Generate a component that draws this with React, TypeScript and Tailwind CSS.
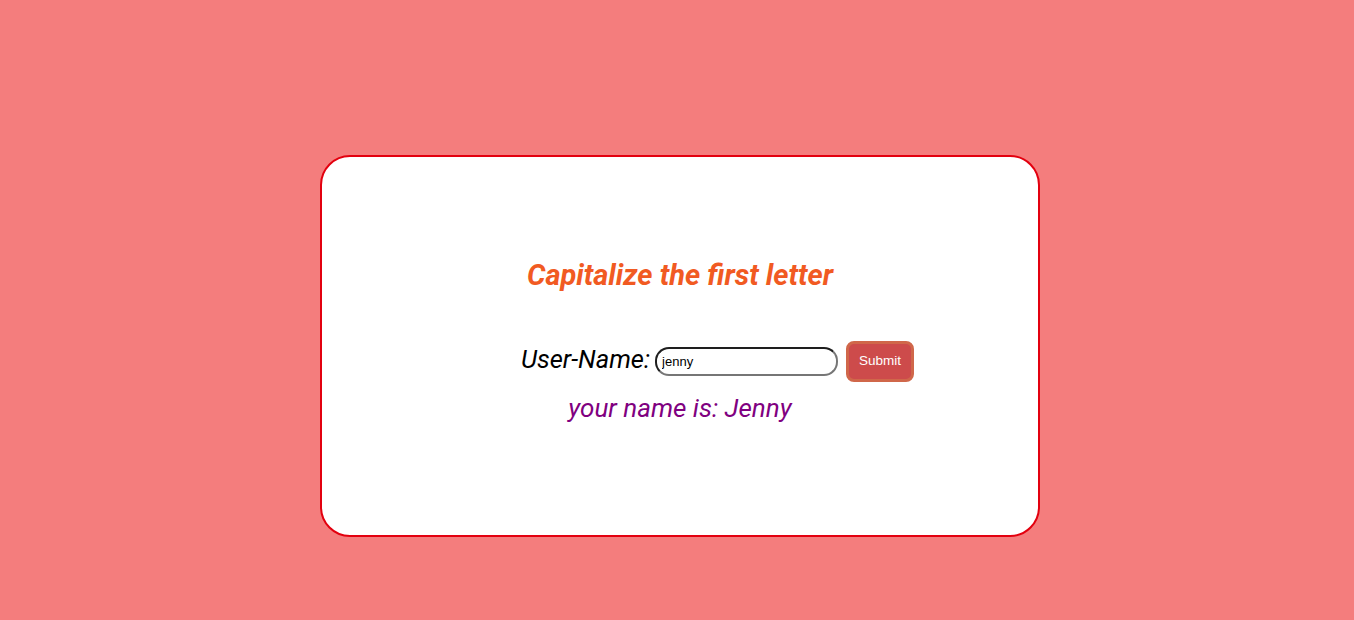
import React from "react";

export default function App() {
  return (
    <div className="w-full h-[620px] bg-[#f47d7d] flex items-start justify-center pt-[155px] pl-[6px]" style={{ fontFamily: "Roboto, sans-serif" }}>
      <div className="w-[720px] h-[382px] bg-white border-2 border-[#e3000f] rounded-[30px] flex flex-col items-center">
        <h1 className="mt-[100px] text-[29px] leading-[36px] font-bold italic text-[#f15a22]">Capitalize the first letter</h1>
        <div className="mt-[48px] flex items-center pl-[75px]">
          <span className="text-[25.5px] leading-[30px] italic text-black -mt-[6px]">User-Name:</span>
          <input
            defaultValue="jenny"
            className="ml-[5px] w-[183px] h-[29px] rounded-[14px] border-2 border-[#1e1e1e] border-b-[#767676] border-r-[#767676] px-[5px] text-[13px] text-black outline-none"
            style={{ fontFamily: "'Liberation Sans', Arial, sans-serif" }}
          />
          <button
            className="ml-[8px] w-[68px] h-[41px] rounded-[8px] bg-[#cd4b4b] border-[3px] border-[#d0674a] text-white text-[13.5px]"
            style={{ fontFamily: "'Liberation Sans', Arial, sans-serif" }}
          >
            Submit
          </button>
        </div>
        <p className="mt-[10px] text-[26px] leading-[32px] italic text-[#800080]">your name is: Jenny</p>
      </div>
    </div>
  );
}
